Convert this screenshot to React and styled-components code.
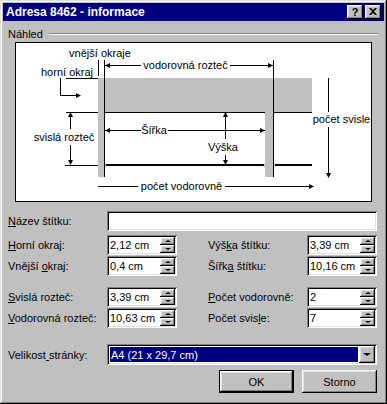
import React from 'react';
import styled, { createGlobalStyle } from 'styled-components';

const GlobalStyle = createGlobalStyle`
  html, body {
    margin: 0;
    padding: 0;
    background: #c0c0c0;
  }
  body {
    font-family: "Liberation Sans", Arial, sans-serif;
    font-size: 11px;
    color: #000;
  }
`;

const raised = `
  box-shadow: inset -1px -1px #000, inset 1px 1px #fff,
    inset -2px -2px #808080, inset 2px 2px #dfdfdf;
`;

const sunken = `
  box-shadow: inset 1px 1px #808080, inset -1px -1px #fff,
    inset 2px 2px #000, inset -2px -2px #dfdfdf;
`;

const Window = styled.div`
  width: 387px;
  height: 404px;
  box-sizing: border-box;
  padding: 3px;
  background: #c0c0c0;
  box-shadow: inset -1px -1px #000, inset 1px 1px #dfdfdf,
    inset -2px -2px #808080, inset 2px 2px #fff;
  display: flex;
  flex-direction: column;
`;

const TitleBar = styled.div`
  height: 18px;
  flex: none;
  background: #000080;
  color: #fff;
  display: flex;
  align-items: center;
  padding: 0 3px 0 3px;
  font-size: 12px;
  font-weight: bold;
`;

const Title = styled.div`
  flex: 1;
  white-space: nowrap;
`;

const CaptionButton = styled.div`
  width: 16px;
  height: 14px;
  box-sizing: border-box;
  background: #c0c0c0;
  ${raised}
  display: flex;
  align-items: center;
  justify-content: center;
  color: #000;
  font-size: 11px;
  font-weight: bold;
  margin-left: ${({ $gap }) => $gap || 0}px;
  padding-bottom: 1px;
`;

const Body = styled.div`
  flex: 1;
  display: flex;
  flex-direction: column;
  padding: 6px 7px 8px 5px;
`;

const GroupHeader = styled.div`
  display: flex;
  align-items: center;
  height: 13px;
`;

const EtchedLine = styled.div`
  flex: 1;
  height: 0;
  margin-left: 6px;
  margin-right: -1px;
  border-top: 1px solid #808080;
  border-bottom: 1px solid #fff;
`;

const Preview = styled.div`
  width: 357px;
  height: 160px;
  box-sizing: border-box;
  margin: 2px 0 0 7px;
  border: 1px solid #000;
  background: #fff;
  svg {
    display: block;
  }
`;

const Row = styled.div`
  display: flex;
  align-items: center;
  margin-top: ${({ $top }) => $top}px;
`;

const RowLabel = styled.div`
  width: 99px;
  flex: none;
  white-space: nowrap;
`;

const Key = styled.span`
  text-decoration: underline;
  text-underline-offset: 1px;
`;

const TextField = styled.div`
  flex: 1;
  height: 20px;
  box-sizing: border-box;
  background: #fff;
  ${sunken}
`;

const FieldGrid = styled.div`
  display: grid;
  grid-template-columns: 99px 70px 31px 99px 70px;
  grid-auto-rows: 20px;
  row-gap: 1px;
  align-items: center;
  margin-top: ${({ $top }) => $top}px;
`;

const SpinBox = styled.div`
  height: 20px;
  box-sizing: border-box;
  padding: 2px;
  background: #fff;
  ${sunken}
  display: flex;
  align-items: stretch;
`;

const SpinValue = styled.div`
  flex: 1;
  display: flex;
  align-items: center;
  padding-left: 1px;
  white-space: nowrap;
`;

const SpinButtons = styled.div`
  width: 15px;
  display: flex;
  flex-direction: column;
`;

const SpinButton = styled.div`
  flex: 1;
  background: #c0c0c0;
  ${raised}
  display: flex;
  align-items: center;
  justify-content: center;
`;

const Triangle = styled.span`
  width: 0;
  height: 0;
  border-left: ${({ $size }) => $size}px solid transparent;
  border-right: ${({ $size }) => $size}px solid transparent;
  ${({ $up, $size }) =>
    $up
      ? `border-bottom: ${$size - 1}px solid #000;`
      : `border-top: ${$size - 1}px solid #000;`}
`;

const Combo = styled.div`
  flex: 1;
  height: 21px;
  box-sizing: border-box;
  padding: 2px;
  background: #fff;
  ${sunken}
  display: flex;
  align-items: stretch;
`;

const Selected = styled.div`
  flex: 1;
  margin: 1px 1px 1px 1px;
  background: #000080;
  color: #fff;
  display: flex;
  align-items: center;
  padding-left: 1px;
  white-space: nowrap;
`;

const DropButton = styled.div`
  width: 16px;
  background: #c0c0c0;
  ${raised}
  display: flex;
  align-items: center;
  justify-content: center;
`;

const ButtonRow = styled.div`
  display: flex;
  justify-content: flex-end;
  gap: 8px;
  margin-top: 5px;
`;

const Button = styled.div`
  width: 75px;
  height: 23px;
  box-sizing: border-box;
  background: #c0c0c0;
  display: flex;
  align-items: center;
  justify-content: center;
  ${({ $default }) =>
    $default
      ? `box-shadow: inset 0 0 0 1px #000, inset -2px -2px #000, inset 2px 2px #fff,
          inset -3px -3px #808080, inset 3px 3px #dfdfdf;`
      : raised}
`;

const FONT = '"Liberation Sans", Arial, sans-serif';

const Arrow = ({ x, y, dir }) => {
  const pts = {
    right: `${x},${y} ${x - 5},${y - 2.5} ${x - 5},${y + 2.5}`,
    left: `${x},${y} ${x + 5},${y - 2.5} ${x + 5},${y + 2.5}`,
    up: `${x},${y} ${x - 2.5},${y + 5} ${x + 2.5},${y + 5}`,
    down: `${x},${y} ${x - 2.5},${y - 5} ${x + 2.5},${y - 5}`,
  }[dir];
  return <polygon points={pts} fill="#000" />;
};

const Label = ({ x, y, children }) => (
  <text x={x} y={y} textAnchor="middle" fontFamily={FONT} fontSize="11" fill="#000">
    {children}
  </text>
);

const Diagram = () => (
  <svg width="355" height="158" viewBox="16 43 355 158">
    {/* page and labels */}
    <rect x="98" y="78" width="214" height="99" fill="#c0c0c0" />
    <rect x="105" y="112" width="160" height="53" rx="3" fill="#fff" />
    <rect x="274" y="112" width="50" height="53" rx="3" fill="#fff" />
    <rect x="105" y="166" width="160" height="30" rx="3" fill="#fff" />
    <rect x="274" y="166" width="50" height="30" rx="3" fill="#fff" />

    <g stroke="#000" fill="none" shapeRendering="crispEdges">
      <path d="M66 112.5 H98" />
      <path d="M65 165.5 H98" />
      <path d="M105 112.5 H265 M274 112.5 H312" />
      <path d="M106 165 H264 M275 165 H312" strokeWidth="2" />
      <path d="M104.5 60 V177 M273.5 60 V177" />
      <path d="M98.5 60 V76" />

      {/* vodorovná rozteč */}
      <path d="M105 65.5 H141 M230 65.5 H273" />
      {/* horní okraj */}
      <path d="M66 78.5 H98" />
      <path d="M60.5 78 V95.5 H78" />
      {/* svislá rozteč */}
      <path d="M70.5 113 V129 M70.5 145 V164" />
      {/* šířka */}
      <path d="M105 130.5 H141 M168 130.5 H265" />
      {/* výška */}
      <path d="M225.5 113 V139 M225.5 155 V164" />
      {/* počet svisle */}
      <path d="M328.5 78 V112 M328.5 127 V177" />
      {/* počet vodorovně */}
      <path d="M98 186.5 H138 M225 186.5 H313" />
    </g>

    <Arrow x={105} y={65.5} dir="left" />
    <Arrow x={273} y={65.5} dir="right" />
    <Arrow x={81} y={95.5} dir="right" />
    <Arrow x={70.5} y={112} dir="up" />
    <Arrow x={70.5} y={165} dir="down" />
    <Arrow x={105} y={130.5} dir="left" />
    <Arrow x={265} y={130.5} dir="right" />
    <Arrow x={225.5} y={112} dir="up" />
    <Arrow x={225.5} y={165} dir="down" />
    <Arrow x={328.5} y={178} dir="down" />
    <Arrow x={314} y={186.5} dir="right" />

    <Label x={100} y={57}>vnější okraje</Label>
    <Label x={185.5} y={69}>vodorovná rozteč</Label>
    <Label x={67} y={76}>horní okraj</Label>
    <Label x={64} y={141}>svislá rozteč</Label>
    <Label x={154} y={134}>Šířka</Label>
    <Label x={223} y={151}>Výška</Label>
    <Label x={341.5} y={123}>počet svisle</Label>
    <Label x={181.5} y={190}>počet vodorovně</Label>
  </svg>
);

const Spinner = ({ value }) => (
  <SpinBox>
    <SpinValue>{value}</SpinValue>
    <SpinButtons>
      <SpinButton>
        <Triangle $up $size={3} />
      </SpinButton>
      <SpinButton>
        <Triangle $size={3} />
      </SpinButton>
    </SpinButtons>
  </SpinBox>
);

const CloseGlyph = () => (
  <svg width="8" height="7" viewBox="0 0 8 7">
    <path d="M0 0 L2 0 L4 2 L6 0 L8 0 L5 3.5 L8 7 L6 7 L4 5 L2 7 L0 7 L3 3.5 Z" fill="#000" />
  </svg>
);

const App = () => (
  <>
    <GlobalStyle />
    <Window>
      <TitleBar>
        <Title>Adresa 8462 - informace</Title>
        <CaptionButton>?</CaptionButton>
        <CaptionButton $gap={2}>
          <CloseGlyph />
        </CaptionButton>
      </TitleBar>
      <Body>
        <GroupHeader>
          Náhled
          <EtchedLine />
        </GroupHeader>
        <Preview>
          <Diagram />
        </Preview>

        <Row $top={9}>
          <RowLabel>
            <Key>N</Key>ázev štítku:
          </RowLabel>
          <TextField />
        </Row>

        <FieldGrid $top={4}>
          <RowLabel>
            <Key>H</Key>orní okraj:
          </RowLabel>
          <Spinner value="2,12 cm" />
          <span />
          <RowLabel>
            Výš<Key>k</Key>a štítku:
          </RowLabel>
          <Spinner value="3,39 cm" />

          <RowLabel>
            Vnější <Key>o</Key>kraj:
          </RowLabel>
          <Spinner value="0,4 cm" />
          <span />
          <RowLabel>
            Šířk<Key>a</Key> štítku:
          </RowLabel>
          <Spinner value="10,16 cm" />
        </FieldGrid>

        <FieldGrid $top={11}>
          <RowLabel>
            <Key>S</Key>vislá rozteč:
          </RowLabel>
          <Spinner value="3,39 cm" />
          <span />
          <RowLabel>
            <Key>P</Key>očet vodorovně:
          </RowLabel>
          <Spinner value="2" />

          <RowLabel>
            <Key>V</Key>odorovná rozteč:
          </RowLabel>
          <Spinner value="10,63 cm" />
          <span />
          <RowLabel>
            Počet svis<Key>l</Key>e:
          </RowLabel>
          <Spinner value="7" />
        </FieldGrid>

        <Row $top={16}>
          <RowLabel>
            Velikost<Key> </Key>stránky:
          </RowLabel>
          <Combo>
            <Selected>A4 (21 x 29,7 cm)</Selected>
            <DropButton>
              <Triangle $size={4} />
            </DropButton>
          </Combo>
        </Row>

        <ButtonRow>
          <Button $default>OK</Button>
          <Button>Storno</Button>
        </ButtonRow>
      </Body>
    </Window>
  </>
);

export default App;
